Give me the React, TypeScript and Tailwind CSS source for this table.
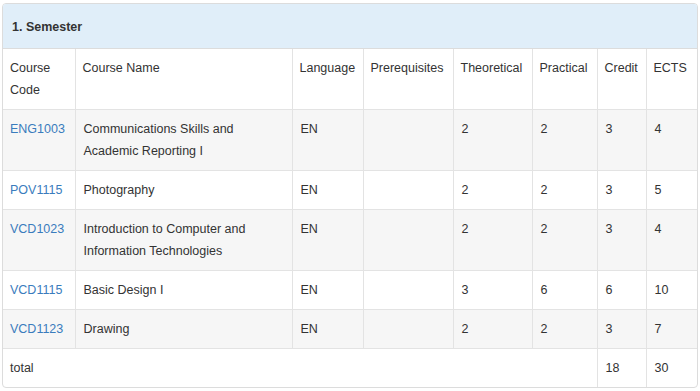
const courses = [
  { code: "ENG1003", name: "Communications Skills and Academic Reporting I", lang: "EN", pre: "", th: 2, pr: 2, credit: 3, ects: 4 },
  { code: "POV1115", name: "Photography", lang: "EN", pre: "", th: 2, pr: 2, credit: 3, ects: 5 },
  { code: "VCD1023", name: "Introduction to Computer and Information Technologies", lang: "EN", pre: "", th: 2, pr: 2, credit: 3, ects: 4 },
  { code: "VCD1115", name: "Basic Design I", lang: "EN", pre: "", th: 3, pr: 6, credit: 6, ects: 10 },
  { code: "VCD1123", name: "Drawing", lang: "EN", pre: "", th: 2, pr: 2, credit: 3, ects: 7 },
];

const headers = ["Course Code", "Course Name", "Language", "Prerequisites", "Theoretical", "Practical", "Credit", "ECTS"];
const widths = ["w-[72px]", "w-[217px]", "w-[71px]", "w-[90px]", "w-[79px]", "w-[65px]", "w-[49px]", "w-[51px]"];

const cell = "border-r border-b border-[#e3e3e3] px-[7px] py-[8px] align-top text-left font-normal last:border-r-0";

const App = () => {
  return (
    <div className="min-h-[391px] bg-white pt-[3px] pl-[2px] font-['Liberation_Sans',Arial,sans-serif] text-[12.5px] leading-[22px] text-[#333]">
      <div className="w-[696px] overflow-hidden rounded border border-[#dcdcdc]">
        <div className="flex h-[45px] items-center border-b border-[#dcdcdc] bg-[#e0eef9] px-[9px] pt-[2px] font-bold">
          1. Semester
        </div>
        <table className="w-[694px] table-fixed border-collapse">
          <colgroup>
            {widths.map((w, i) => (
              <col key={i} className={w} />
            ))}
          </colgroup>
          <thead>
            <tr>
              {headers.map((h) => (
                <th key={h} className={cell}>
                  {h}
                </th>
              ))}
            </tr>
          </thead>
          <tbody>
            {courses.map((c, i) => (
              <tr key={c.code} className={i % 2 === 0 ? "bg-[#f6f6f6]" : "bg-white"}>
                <td className={cell}>
                  <a href="#" className="text-[#3a7cbd]">
                    {c.code}
                  </a>
                </td>
                <td className={`${cell} pl-[8px]`}>{c.name}</td>
                <td className={`${cell} pl-[8px]`}>{c.lang}</td>
                <td className={cell}>{c.pre}</td>
                <td className={`${cell} pl-[8px]`}>{c.th}</td>
                <td className={`${cell} pl-[8px]`}>{c.pr}</td>
                <td className={`${cell} pl-[8px]`}>{c.credit}</td>
                <td className={`${cell} pl-[8px]`}>{c.ects}</td>
              </tr>
            ))}
            <tr>
              <td colSpan={6} className="border-r border-[#e3e3e3] px-[7px] py-[8px]">
                total
              </td>
              <td className="border-r border-[#e3e3e3] px-[8px] py-[8px]">18</td>
              <td className="px-[8px] py-[8px]">30</td>
            </tr>
          </tbody>
        </table>
      </div>
    </div>
  );
};

export default App;
